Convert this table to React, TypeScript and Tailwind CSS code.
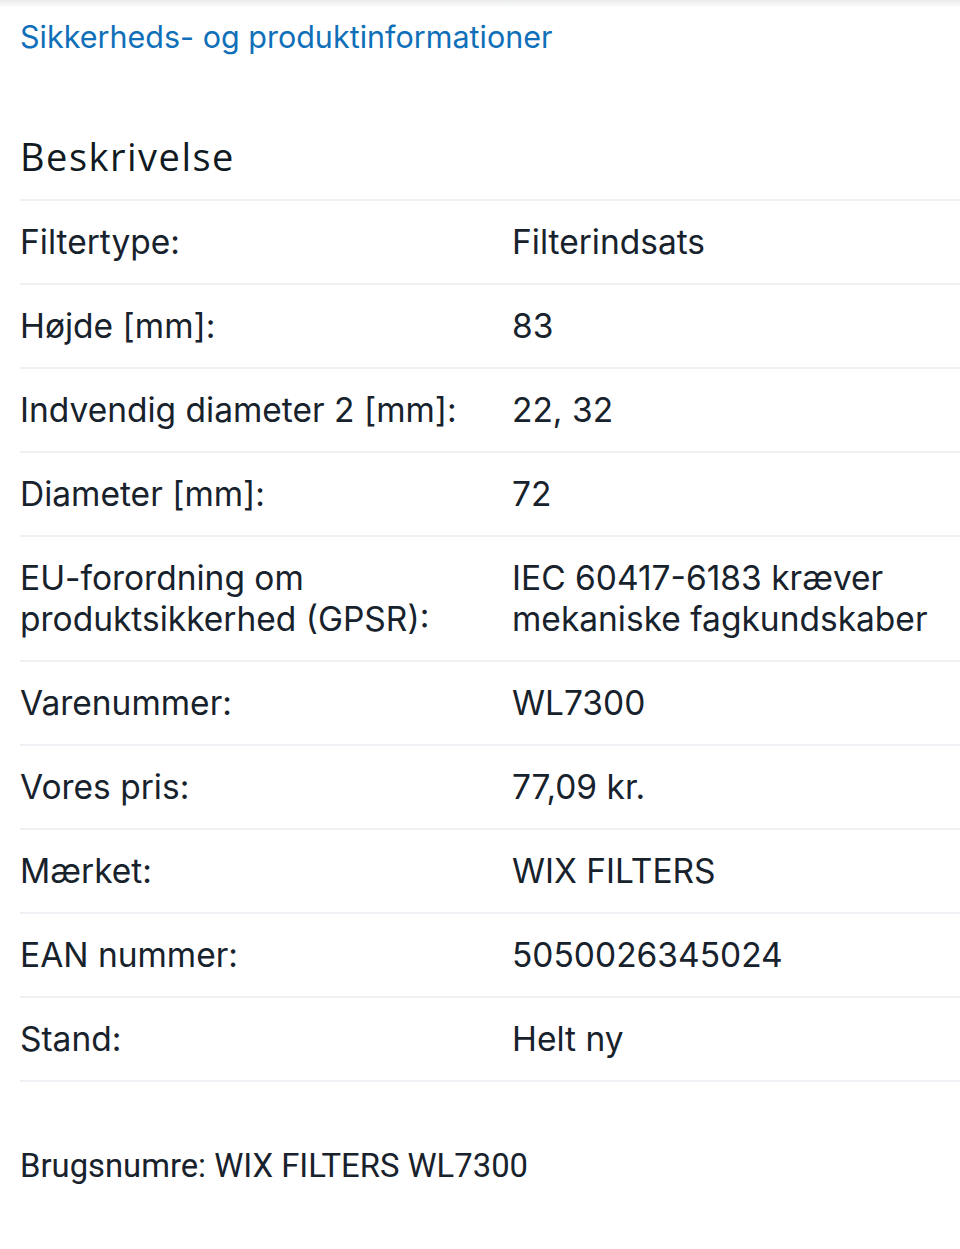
import React from 'react';

const rows: { label: string; value: string }[] = [
  { label: 'Filtertype:', value: 'Filterindsats' },
  { label: 'Højde [mm]:', value: '83' },
  { label: 'Indvendig diameter 2 [mm]:', value: '22, 32' },
  { label: 'Diameter [mm]:', value: '72' },
  { label: 'EU-forordning om produktsikkerhed (GPSR):', value: 'IEC 60417-6183 kræver mekaniske fagkundskaber' },
  { label: 'Varenummer:', value: 'WL7300' },
  { label: 'Vores pris:', value: '77,09 kr.' },
  { label: 'Mærket:', value: 'WIX FILTERS' },
  { label: 'EAN nummer:', value: '5050026345024' },
  { label: 'Stand:', value: 'Helt ny' },
];

export default function App() {
  return (
    <div className="min-h-[1249px] bg-white text-[#17222c] font-['Inter',sans-serif]">
      {/* top shadow edge */}
      <div className="h-2 bg-gradient-to-b from-[#e9eaec] to-white" />

      <div className="pl-5">
        <a href="#" className="block pt-[10px] text-[30.5px] leading-[38px] text-[#0f6fb8]">
          Sikkerheds- og produktinformationer
        </a>

        <h2 className="mt-[78px] text-[38px] leading-[44px] font-medium tracking-[1.5px] text-[#101a22] font-['Open_Sans',sans-serif]">Beskrivelse</h2>

        <div className="mt-[21px] border-t-2 border-[#eef0f3]">
          {rows.map((r) => (
            <div key={r.label} className="grid grid-cols-[492px_1fr] border-b-2 border-[#eef0f3] py-[20.5px] text-[33.5px] leading-[41px]">
              <div className="pr-4">{r.label}</div>
              <div className="pr-4">{r.value}</div>
            </div>
          ))}
        </div>

        <p className="mt-[64px] text-[32.8px] leading-[40px] font-['Roboto',sans-serif]">
          Brugsnumre: WIX FILTERS WL7300
        </p>
      </div>
    </div>
  );
}
